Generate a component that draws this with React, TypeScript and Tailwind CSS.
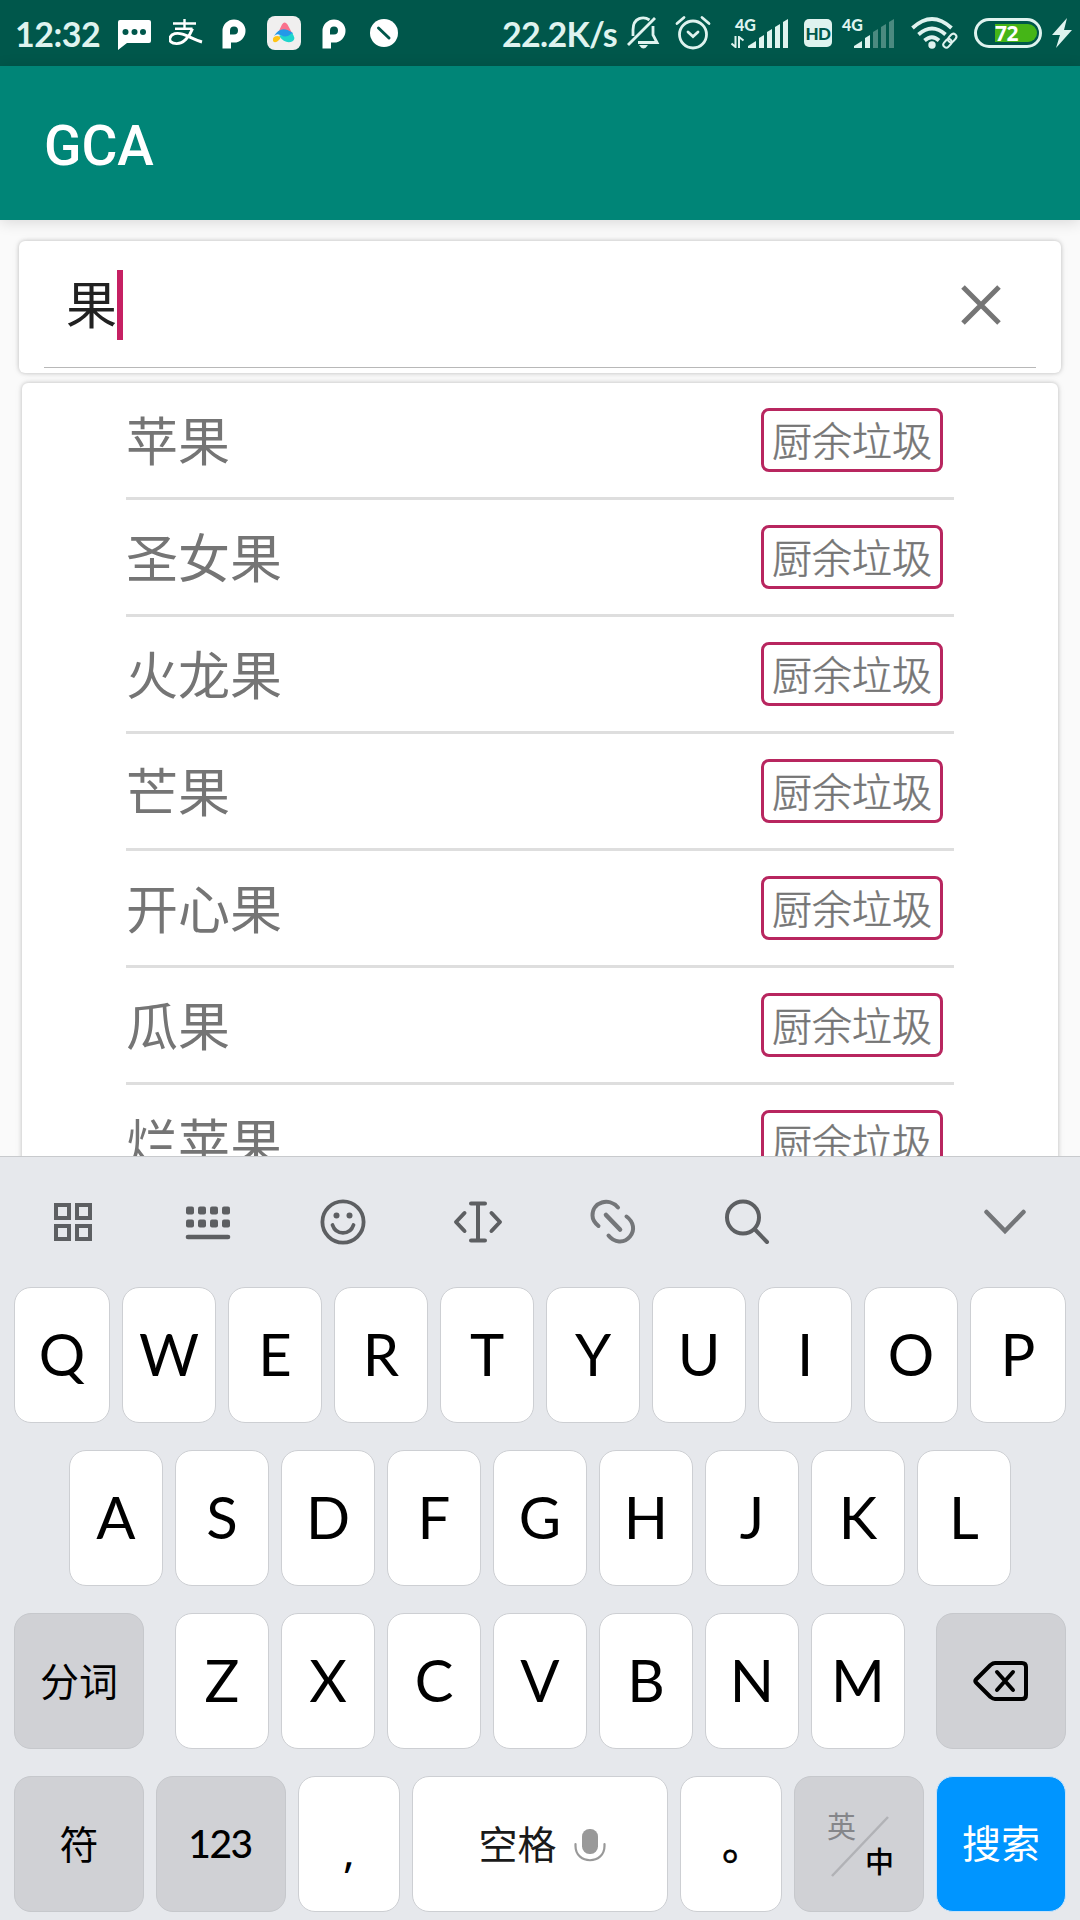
import type { ReactNode } from "react";

const ITEMS = ["苹果", "圣女果", "火龙果", "芒果", "开心果", "瓜果", "烂苹果"];

function PLogo() {
  return (
    <svg width="24" height="30" viewBox="0 0 24 30" className="shrink-0">
      <path
        fillRule="evenodd"
        d="M0.500 29.500V12A11.500 11.500 0 1 1 12 23.500H9V29.500ZM12 7.500A4 4 0 0 0 8 11.500V15.500H12A4 4 0 1 0 12 7.500Z"
        fill="#fff"
      />
    </svg>
  );
}

function Signal({ faded }: { faded?: boolean }) {
  const dim = faded ? "#4b8a80" : "#dff3ef";
  return (
    <svg width="41" height="30" viewBox="0 0 41 30" className="shrink-0">
      <path d="M0 29V27L8 22V29Z" fill="#dff3ef" />
      <path d="M11 29V19L16 16V29Z" fill="#dff3ef" />
      <path d="M19 29V13L24 10V29Z" fill={dim} />
      <path d="M27 29V8L32 5V29Z" fill={dim} />
      <path d="M35 29V3L40 0V29Z" fill={dim} />
    </svg>
  );
}

function StatusBar() {
  return (
    <div className="flex h-[66px] shrink-0 items-center bg-[#00574b] text-[#dff3ef]">
      <div className="ml-[15px] w-[88px] whitespace-nowrap pt-0.5 font-['Lato'] text-[34px] font-bold leading-none tracking-[-0.5px]">12:32</div>
      <svg width="34" height="32" viewBox="0 0 34 32" className="ml-[15px] mt-1 shrink-0">
        <path d="M2 1H31Q33 1 33 3V22Q33 24 31 24H9L0 31V3Q0 1 2 1Z" fill="#fff" />
        <circle cx="7.500" cy="13" r="3" fill="#00574b" />
        <circle cx="16.500" cy="13" r="3" fill="#00574b" />
        <circle cx="25" cy="13" r="3" fill="#00574b" />
      </svg>
      <svg width="34" height="28" viewBox="0 0 34 28" className="ml-[17px] shrink-0" fill="none" stroke="#fff">
        <path d="M15.500 0V9M4 4.500H27M6 9.800H23.500" strokeWidth="2.400" />
        <path d="M23.500 9.800C20.500 18 14 24.800 7.500 24.600 2.500 24.500 0 22 1 18.800 2.300 14.500 8 13.400 13.500 15.200 19.500 17.100 26 21 33 23" strokeWidth="2.900" />
      </svg>
      <div className="ml-[19px] mt-0.5 flex">
        <PLogo />
      </div>
      <svg width="34" height="34" viewBox="0 0 34 34" className="ml-[21px] shrink-0">
        <rect width="34" height="34" rx="8" fill="#f0efef" />
        <path d="M11 17 15 8.500Q17.500 4.500 20.500 8.500L25 17Q18 12 11 17Z" fill="#f9728d" />
        <path d="M7 20Q14 8 26 17L24 20Q18 24 13 19Q10 17 7 20Z" fill="#2499e8" />
        <path d="M14 19Q19 23 25 17Q29 22 26 25Q19 29 12 20Z" fill="#1fd5cc" />
        <path d="M6 25Q5 20 11 20Q15 21 12 24Q8 28 6 25Z" fill="#ffc414" />
      </svg>
      <div className="ml-[21px] mt-0.5 flex">
        <PLogo />
      </div>
      <svg width="28" height="28" viewBox="0 0 28 28" className="ml-6 shrink-0">
        <circle cx="14" cy="14" r="14" fill="#fff" />
        <path d="M8.500 9 19 19" stroke="#00574b" strokeWidth="3" strokeLinecap="round" />
      </svg>
      <div className="ml-[104px] w-[118px] whitespace-nowrap pt-0.5 font-['Lato'] text-[34px] font-bold leading-none tracking-[-0.700px]">22.2K/s</div>
      <svg width="33" height="34" viewBox="0 0 33 34" className="ml-[7px] shrink-0" fill="none" stroke="#dff3ef" strokeWidth="2.800">
        <path d="M1 29 28 2" />
        <path d="M6 20V14C6 1 17 0 22.500 4M26 10V19L30 26.500H11" />
        <path d="M12 29H21Q16.500 36 12 29Z" fill="#dff3ef" stroke="none" />
      </svg>
      <svg width="36" height="36" viewBox="0 0 36 36" className="ml-[15px] shrink-0" fill="none" stroke="#dff3ef" strokeWidth="2.800" strokeLinecap="round">
        <circle cx="18" cy="19.500" r="13.500" />
        <path d="M13 17 18 21.500 23 17M2 8.500 9 2.500M34 8.500 27 2.500" />
      </svg>
      <div className="ml-5 flex h-8 w-[58px] items-end">
        <svg width="14" height="12" viewBox="0 0 14 12" className="mb-px shrink-0" fill="none" stroke="#dff3ef" strokeWidth="2">
          <path d="M4.500 0V11L0.500 7.500M8 12V1L12.500 4.500" />
        </svg>
        <div className="relative ml-[3px] flex">
          <span className="absolute -left-[13px] -top-0.5 font-['Lato'] text-[16px] font-black leading-none">4G</span>
          <Signal />
        </div>
      </div>
      <div className="ml-[15px] flex h-7 w-7 shrink-0 items-center justify-center rounded-[5px] bg-[#dff3ef] font-['Lato'] text-[17px] font-black leading-none tracking-[-0.500px] text-[#00574b]">HD</div>
      <div className="relative ml-[22px] flex h-8 items-end">
        <span className="absolute -left-[12px] top-0 font-['Lato'] text-[16px] font-black leading-none">4G</span>
        <Signal faded />
      </div>
      <svg width="48" height="32" viewBox="0 0 48 32" className="ml-4 shrink-0" fill="none" stroke="#dff3ef">
        <path d="M1.500 11Q21 -7 40.500 11" strokeWidth="3.800" />
        <path d="M7.500 17.500Q21 5.500 34.500 17.500" strokeWidth="3.800" />
        <path d="M13.500 23.500Q21 17 28 23.500" strokeWidth="3.800" />
        <circle cx="21" cy="28" r="3.700" fill="#dff3ef" stroke="none" />
        <g transform="rotate(-48 39 23.500)" strokeWidth="2">
          <rect x="30.500" y="20.500" width="9.500" height="6" rx="3" />
          <rect x="37.500" y="20.500" width="9.500" height="6" rx="3" />
        </g>
      </svg>
      <div className="ml-[15px] flex h-[30px] w-[68px] shrink-0 items-center justify-end rounded-full border-[3px] border-[#dff3ef] pr-0.5">
        <div className="flex h-[18px] w-[42px] items-center rounded-r-full bg-[#45b517] font-['Noto_Sans'] text-[21px] font-bold leading-none tracking-[-0.500px] text-white">
          72
        </div>
      </div>
      <svg width="20" height="30" viewBox="0 0 20 30" className="ml-[10px] shrink-0">
        <path d="M15 0 0 17H8L4 30 20 12H12Z" fill="#dff3ef" />
      </svg>
    </div>
  );
}

function Tag() {
  return (
    <div className="flex h-16 w-[182px] items-center justify-center whitespace-nowrap rounded-lg border-[3px] border-[#b8265f] pb-0.5 text-[40px] font-light leading-none text-[#757575] [-webkit-text-stroke:0.500px_#757575]">
      厨余垃圾
    </div>
  );
}

function Key({ children, className = "w-[94px]", tone = "light" }: { children: ReactNode; className?: string; tone?: "light" | "dark" | "blue" }) {
  const tones = {
    light: "border-[#cdcfd3] bg-white text-black",
    dark: "border-[#c6c8cc] bg-[#d0d1d5] text-black",
    blue: "border-[#c7e2fa] bg-[#0095ff] text-white",
  };
  return (
    <div className={`flex h-[136px] shrink-0 items-center justify-center rounded-[17px] border ${tones[tone]} ${className}`}>
      {children}
    </div>
  );
}

function Letter({ c }: { c: string }) {
  return <span className="pb-0.5 font-['Lato'] text-[58px] leading-none">{c}</span>;
}

function Tool({ children }: { children: ReactNode }) {
  return (
    <div className="flex w-[134.8px] justify-center">
      <svg width="50" height="50" viewBox="0 0 50 50" fill="none" stroke="#5d5f62" strokeWidth="4" strokeLinecap="round" strokeLinejoin="round">
        {children}
      </svg>
    </div>
  );
}

function Keyboard() {
  return (
    <div className="h-[764px] shrink-0 border-t border-[#c8cacd] bg-[#e6e8ec]">
      <div className="flex h-[130px] items-center pl-[6px]">
        <Tool>
          <g strokeLinejoin="miter">
            <rect x="8" y="8" width="13" height="13" />
            <rect x="29" y="8" width="13" height="13" />
            <rect x="8" y="29" width="13" height="13" />
            <rect x="29" y="29" width="13" height="13" />
          </g>
        </Tool>
        <Tool>
          {[3, 15, 27, 39].map((x) => (
            <g key={x} fill="#5d5f62" stroke="none">
              <rect x={x} y="9.500" width="8" height="8" rx="2" />
              <rect x={x} y="22.500" width="8" height="8" rx="2" />
            </g>
          ))}
          <path d="M5 40H45" strokeWidth="4.600" />
        </Tool>
        <Tool>
          <circle cx="25" cy="25" r="20.600" strokeWidth="3.800" />
          <circle cx="18.500" cy="18.500" r="3" fill="#5d5f62" stroke="none" />
          <circle cx="31.500" cy="18.500" r="3" fill="#5d5f62" stroke="none" />
          <path d="M14.500 28C18 38.500 32 38.500 35.500 28" strokeWidth="3.800" />
        </Tool>
        <Tool>
          <path d="M18 6.500H32M25 6.500V43.500M18 43.500H32" />
          <path d="M11.500 16 3 25 11.500 34M38.500 16 47 25 38.500 34" />
        </Tool>
        <Tool>
          <g stroke="#747679">
            <path d="M30 10.500C21 0 4.500 5 4.500 18.500 4.500 23 7.500 26.500 10.500 29" />
            <path d="M38.500 19.500C46 25 47 33.500 42 39.500 36 47 26 45.500 20.500 38.500" />
            <path d="M18 18 32 32.500" strokeWidth="4.600" />
          </g>
        </Tool>
        <Tool>
          <circle cx="21" cy="20.500" r="16" />
          <path d="M33 32.500 45 45" />
        </Tool>
        <div className="ml-auto flex w-[150px] justify-center">
          <svg width="44" height="28" viewBox="0 0 44 28" fill="none" stroke="#747679" strokeWidth="4.500" strokeLinecap="round">
            <path d="M3.500 4 22 23 40.500 4" />
          </svg>
        </div>
      </div>
      <div className="flex flex-col gap-[27px]">
        <div className="flex gap-3 pl-[14px]">
          {"QWERTYUIOP".split("").map((c) => (
            <Key key={c} className={c === "Q" || c === "P" ? "w-24" : "w-[94px]"}>
              <Letter c={c} />
            </Key>
          ))}
        </div>
        <div className="flex gap-3 pl-[69px]">
          {"ASDFGHJKL".split("").map((c) => (
            <Key key={c}>
              <Letter c={c} />
            </Key>
          ))}
        </div>
        <div className="flex justify-between px-[14px]">
          <Key tone="dark" className="w-[130px]">
            <span className="pb-[3px] text-[39px] leading-none">分词</span>
          </Key>
          <div className="flex gap-3">
            {"ZXCVBNM".split("").map((c) => (
              <Key key={c}>
                <Letter c={c} />
              </Key>
            ))}
          </div>
          <Key tone="dark" className="w-[130px]">
            <svg width="56" height="42" viewBox="0 0 56 42" fill="none" stroke="#000" strokeWidth="4" strokeLinecap="round" strokeLinejoin="round">
              <path d="M22 3H49Q53 3 53 7V35Q53 39 49 39H22Q20 39 17.500 37L3 22.500Q1.500 21 3 19.500L17.500 5Q20 3 22 3Z" />
              <path d="M24 12 40 30M40 12 24 30" />
            </svg>
          </Key>
        </div>
        <div className="flex gap-3 pl-[14px]">
          <Key tone="dark" className="w-[130px]">
            <span className="pb-1 text-[39px] leading-none">符</span>
          </Key>
          <Key tone="dark" className="w-[130px]">
            <span className="pb-px pr-0.5 font-['Lato'] text-[39px] font-medium leading-none tracking-[-1.500px]">123</span>
          </Key>
          <Key className="w-[102px]">
            <span className="pt-3 font-['Noto_Sans'] text-[44px] leading-none">,</span>
          </Key>
          <Key className="w-[256px]">
            <span className="pb-1 pl-1 text-[39px] leading-none text-[#1a1a1a]">空格</span>
            <svg width="32" height="34" viewBox="0 0 32 34" className="ml-[17px] mt-[3px] shrink-0">
              <rect x="8" y="0" width="16" height="25" rx="7.500" fill="#999" />
              <path d="M1.500 15V17C1.500 36 30.500 36 30.500 17V15" fill="none" stroke="#999" strokeWidth="2.200" strokeLinecap="round" />
            </svg>
          </Key>
          <Key className="w-[102px]">
            <span className="pb-1 pl-6 text-[42px] leading-none [-webkit-text-stroke:0.600px_#000]">。</span>
          </Key>
          <Key tone="dark" className="w-[130px]">
            <div className="relative h-[70px] w-[64px]">
              <svg width="68" height="70" viewBox="0 0 68 70">
                <path d="M5 67 61 8" stroke="#b1b2b6" strokeWidth="2.500" />
              </svg>
              <span className="absolute left-0 top-0.5 text-[29px] leading-none text-[#85868a]">英</span>
              <span className="absolute left-[38px] top-[37px] text-[29px] font-medium leading-none">中</span>
            </div>
          </Key>
          <Key tone="blue" className="w-[130px]">
            <span className="pb-[5px] text-[39px] leading-none">搜索</span>
          </Key>
        </div>
      </div>
    </div>
  );
}

export default function App() {
  return (
    <div className="flex h-[1920px] w-[1080px] flex-col overflow-hidden bg-[#fafafa] font-['Noto_Sans_CJK_SC',sans-serif]">
      <StatusBar />
      <div className="z-10 flex h-[154px] shrink-0 items-center bg-[#008577] pl-11 pt-1.5 font-['Roboto'] text-[55px] font-medium leading-none text-white shadow-[0_2px_14px_rgba(0,0,0,0.14)]">
        GCA
      </div>
      <div className="flex h-[936px] shrink-0 flex-col overflow-hidden pt-[21px]">
        <div className="mx-[19px] flex h-[132px] shrink-0 flex-col rounded-md bg-white px-[25px] shadow-[0_0_4px_rgba(0,0,0,0.22),0_0_10px_rgba(0,0,0,0.06)]">
          <div className="flex h-[127px] items-center border-b border-[#b8b8b8] pl-[22px] pr-[35px]">
            <span className="pb-[3px] text-[51px] leading-none text-[#212121]">果</span>
            <span className="mt-px h-[70px] w-1.5 bg-[#c62063]" />
            <svg width="40" height="40" viewBox="0 0 40 40" className="ml-auto mt-0.5">
              <path d="M2 2 38 38M38 2 2 38" stroke="#757575" strokeWidth="5" />
            </svg>
          </div>
        </div>
        <div className="mx-[22px] mt-[10px] shrink-0 rounded-md bg-white px-[104px] shadow-[0_0_4px_rgba(0,0,0,0.22),0_0_10px_rgba(0,0,0,0.06)]">
          {ITEMS.map((name) => (
            <div key={name} className="flex h-[117px] items-center justify-between border-b-[3px] border-[#dedede] pr-[11px]">
              <span className="pb-[3px] text-[52px] leading-none text-[#757575]">{name}</span>
              <Tag />
            </div>
          ))}
        </div>
      </div>
      <Keyboard />
    </div>
  );
}
